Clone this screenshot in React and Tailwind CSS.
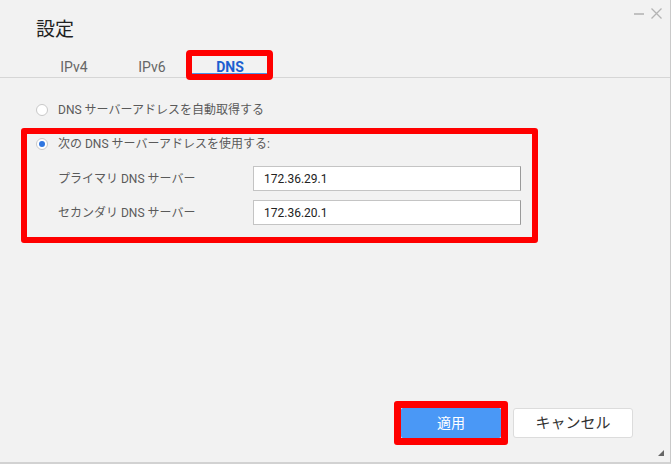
import React from 'react';

const Radio = ({ checked }) => (
  <span className="w-[12px] h-[12px] rounded-full bg-white border border-[#c8c8c8] flex items-center justify-center shrink-0">
    {checked && <span className="w-[6px] h-[6px] rounded-full bg-[#2f76e0]" />}
  </span>
);

const tabs = [
  { id: 'ipv4', label: 'IPv4' },
  { id: 'ipv6', label: 'IPv6' },
  { id: 'dns', label: 'DNS' },
];

const App = () => {
  const active = 'dns';

  return (
    <div className="relative w-[671px] h-[464px] bg-[#f2f2f2] border-r border-b-2 border-r-[#c9c9c9] border-b-[#d2d2d2] flex flex-col font-['Roboto','Noto_Sans_CJK_JP',sans-serif] overflow-hidden">
      {/* title bar */}
      <div className="flex items-start justify-between">
        <h1 className="pl-[36px] pt-[18px] text-[19px] leading-[24px] text-[#222] font-normal">設定</h1>
        <div className="flex items-center gap-[6px] pt-[8px] pr-[8px]">
          <svg width="11" height="11" viewBox="0 0 11 11">
            <path d="M0 6h10" stroke="#b4b4b4" strokeWidth="1.6" />
          </svg>
          <svg width="11" height="11" viewBox="0 0 11 11">
            <path d="M0.5 0.5l10 10M10.5 0.5l-10 10" stroke="#b4b4b4" strokeWidth="1.3" />
          </svg>
        </div>
      </div>

      {/* tabs */}
      <div className="mt-[11px] pl-[35px] pb-[2px] border-b border-[#d6d6d6] flex">
        {tabs.map((tab) => (
          <div
            key={tab.id}
            className={`relative w-[78px] h-[22px] pt-[6px] text-center text-[14px] leading-[16px] ${
              active === tab.id
                ? 'text-[#1c5fd0] font-bold border-b-2 border-[#4a90e8]'
                : 'text-[#666]'
            }`}
          >
            {tab.label}
            {active === tab.id && (
              <span className="absolute -left-[5px] -right-[4px] -top-[3px] -bottom-[7px] border-[6px] border-[#ff0000] rounded-[4px]" />
            )}
          </div>
        ))}
      </div>

      {/* content */}
      <div className="pl-[21px] pt-[23px] text-[12px] text-[#5a5a5a]">
        <div className="h-[18px] pl-[15px] flex items-center gap-[10px]">
          <Radio />
          <span>DNS サーバーアドレスを自動取得する</span>
        </div>

        <div className="mt-[9px] w-[517px] border-[6px] border-[#ff0000] rounded-[3px] pb-[12px]">
          <div className="h-[19px] pl-[9px] pt-[1px] flex items-center gap-[10px]">
            <Radio checked />
            <span>次の DNS サーバーアドレスを使用する:</span>
          </div>
          <div className="mt-[13px] pl-[31px] flex flex-col gap-[9px]">
            {[
              ['プライマリ DNS サーバー', '172.36.29.1'],
              ['セカンダリ DNS サーバー', '172.36.20.1'],
            ].map(([label, value]) => (
              <div key={label} className="flex items-center">
                <span className="w-[195px]">{label}</span>
                <div className="w-[268px] h-[25px] bg-white border border-[#c4c4c4] border-r-[#9a9a9a] pl-[10px] flex items-center text-[12px] text-[#222]">
                  {value}
                </div>
              </div>
            ))}
          </div>
        </div>
      </div>

      {/* buttons */}
      <div className="mt-auto pb-[17px] pr-[37px] flex items-center justify-end gap-[5px]">
        <div className="border-[7px] border-[#ff0000] rounded-[3px]">
          <button className="w-[100px] h-[30px] bg-[#4a98f6] rounded-[2px] text-white text-[14px]">適用</button>
        </div>
        <button className="w-[120px] h-[30px] bg-white border border-[#dcdcdc] rounded-[3px] text-[#333] text-[15px]">キャンセル</button>
      </div>

      {/* resize grip */}
      <svg className="absolute right-[6px] bottom-[6px]" width="6" height="6" viewBox="0 0 6 6">
        <path d="M6 0L6 6L0 6Z" fill="#666" />
      </svg>
    </div>
  );
};

export default App;
